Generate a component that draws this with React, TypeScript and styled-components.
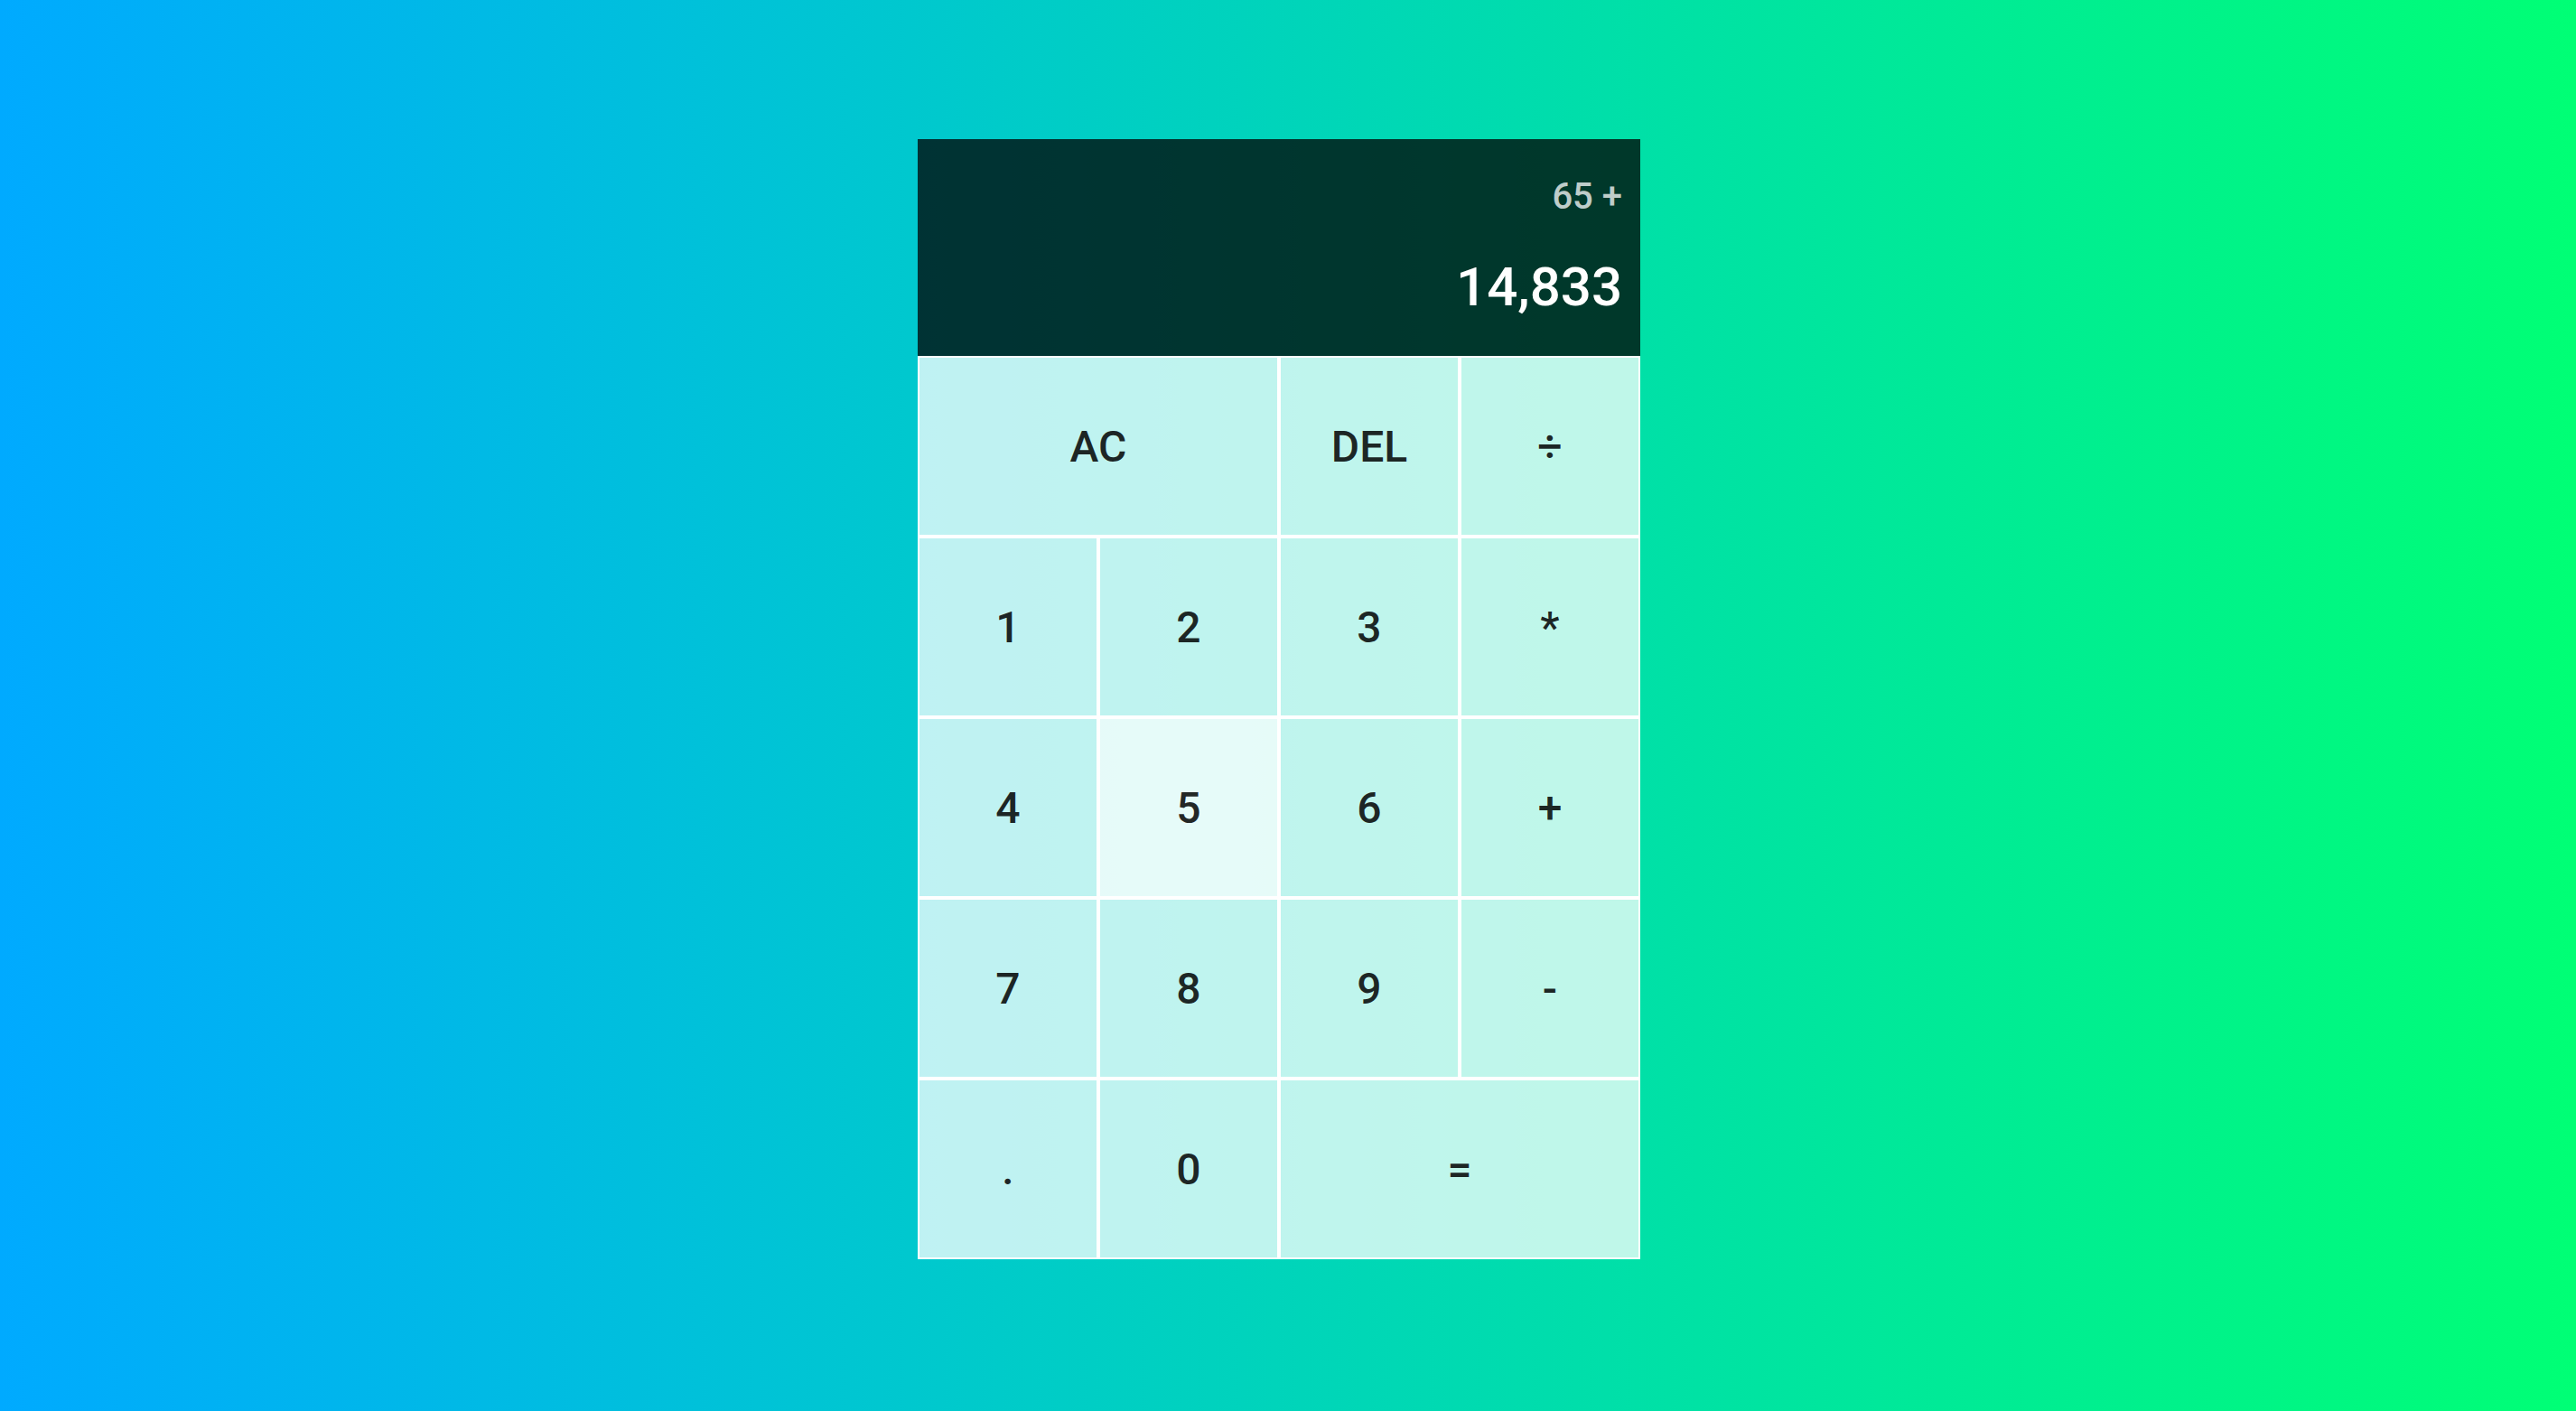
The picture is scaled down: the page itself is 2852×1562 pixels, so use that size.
import styled, { createGlobalStyle } from "styled-components";

const GlobalStyle = createGlobalStyle`
  *, *::before, *::after {
    box-sizing: border-box;
  }

  body {
    margin: 0;
    font-family: "Trebuchet MS", Roboto, sans-serif;
    font-weight: 500;
  }
`;

const Page = styled.main`
  display: grid;
  place-content: center;
  min-height: 100vh;
  padding: 0 20px 14px 0;
  background: linear-gradient(to right, #00aaff, #00ff75);
`;

const Calculator = styled.section`
  display: grid;
  grid-template-columns: repeat(4, 200px);
  grid-template-rows: minmax(240px, auto) repeat(5, 200px);
`;

const Output = styled.output`
  grid-column: 1 / -1;
  display: flex;
  flex-direction: column;
  align-items: flex-end;
  justify-content: space-around;
  padding: 20px;
  background: rgba(0, 0, 0, 0.75);
  overflow-wrap: anywhere;
`;

const PreviousOperand = styled.div`
  color: rgba(255, 255, 255, 0.75);
  font-size: 40px;
  line-height: 46px;
`;

const CurrentOperand = styled.div`
  color: #fff;
  font-size: 60px;
  line-height: 70px;
`;

const Key = styled.button<{ $wide?: boolean; $active?: boolean }>`
  grid-column: span ${({ $wide }) => ($wide ? 2 : 1)};
  padding: 0;
  border: 2px solid #fff;
  background: rgba(255, 255, 255, ${({ $active }) => ($active ? 0.9 : 0.75)});
  background-clip: padding-box;
  color: rgba(0, 0, 0, 0.85);
  font: inherit;
  font-size: 48px;
  cursor: pointer;
  outline: none;

  &:hover,
  &:focus-visible {
    background-color: rgba(255, 255, 255, 0.9);
  }
`;

type KeySpec = { label: string; wide?: boolean; active?: boolean };

const keys: KeySpec[] = [
  { label: "AC", wide: true },
  { label: "DEL" },
  { label: "÷" },
  { label: "1" },
  { label: "2" },
  { label: "3" },
  { label: "*" },
  { label: "4" },
  { label: "5", active: true },
  { label: "6" },
  { label: "+" },
  { label: "7" },
  { label: "8" },
  { label: "9" },
  { label: "-" },
  { label: "." },
  { label: "0" },
  { label: "=", wide: true },
];

export default function App() {
  return (
    <>
      <GlobalStyle />
      <Page>
        <Calculator>
          <Output>
            <PreviousOperand>65 +</PreviousOperand>
            <CurrentOperand>14,833</CurrentOperand>
          </Output>
          {keys.map(({ label, wide, active }) => (
            <Key key={label} type="button" $wide={wide} $active={active}>
              {label}
            </Key>
          ))}
        </Calculator>
      </Page>
    </>
  );
}
